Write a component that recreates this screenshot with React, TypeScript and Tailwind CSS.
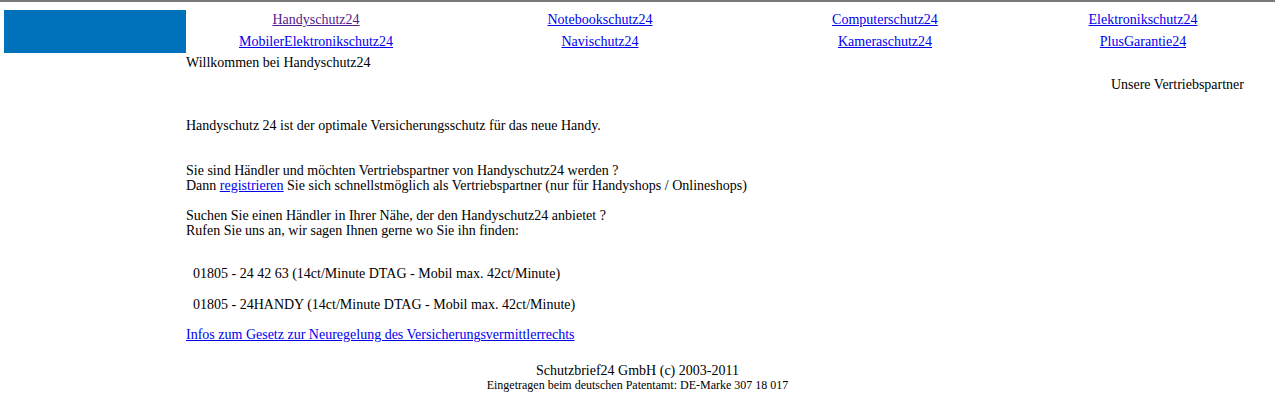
import React from 'react'

const navTop = [
  { label: 'Handyschutz24', visited: true },
  { label: 'Notebookschutz24' },
  { label: 'Computerschutz24' },
  { label: 'Elektronikschutz24' },
]

const navBottom = [
  { label: 'MobilerElektronikschutz24' },
  { label: 'Navischutz24' },
  { label: 'Kameraschutz24' },
  { label: 'PlusGarantie24' },
]

const colWidths = ['w-[260px]', 'w-[308px]', 'w-[262px]', 'w-[254px]']

function NavRow({ items }: { items: { label: string; visited?: boolean }[] }) {
  return (
    <div className="flex leading-[22px]">
      {items.map((item, i) => (
        <div key={item.label} className={`${colWidths[i]} text-center`}>
          <a
            href="#"
            className={`underline ${item.visited ? 'text-[#551a8b]' : 'text-[#0000ee]'}`}
          >
            {item.label}
          </a>
        </div>
      ))}
    </div>
  )
}

export default function App() {
  return (
    <div className="min-h-[417px] bg-white text-[14px] leading-[15px] text-black font-['Liberation_Serif',serif]">
      <div className="h-[2px] bg-[#7a7a7a]" />

      {/* header: logo block + product links */}
      <div className="flex">
        <div className="ml-[4px] mt-[8px] h-[43px] w-[182px] bg-[#0072bc]" />
        <div className="mt-[7px]">
          <NavRow items={navTop} />
          <NavRow items={navBottom} />
        </div>
      </div>

      <div className="pl-[186px] pr-[31px]">
        <div className="mt-[2px]">Willkommen bei Handyschutz24</div>
        <div className="mt-[7px] text-right">Unsere Vertriebspartner</div>

        <div className="mt-[26px]">
          Handyschutz 24 ist der optimale Versicherungsschutz für das neue Handy.
        </div>

        <div className="mt-[30px]">
          Sie sind Händler und möchten Vertriebspartner von Handyschutz24 werden ?
          <br />
          Dann{' '}
          <a href="#" className="text-[#0000ee] underline">
            registrieren
          </a>{' '}
          Sie sich schnellstmöglich als Vertriebspartner (nur für Handyshops / Onlineshops)
        </div>

        <div className="mt-[15px]">
          Suchen Sie einen Händler in Ihrer Nähe, der den Handyschutz24 anbietet ?
          <br />
          Rufen Sie uns an, wir sagen Ihnen gerne wo Sie ihn finden:
        </div>

        <div className="mt-[28px] pl-[7px]">
          01805 - 24 42 63 (14ct/Minute DTAG - Mobil max. 42ct/Minute)
        </div>
        <div className="mt-[16px] pl-[7px]">
          01805 - 24HANDY (14ct/Minute DTAG - Mobil max. 42ct/Minute)
        </div>

        <div className="mt-[15px]">
          <a href="#" className="text-[#0000ee] underline">
            Infos zum Gesetz zur Neuregelung des Versicherungsvermittlerrechts
          </a>
        </div>
      </div>

      <div className="mt-[21px] text-center">
        <div>Schutzbrief24 GmbH (c) 2003-2011</div>
        <div className="text-[12px]">
          Eingetragen beim deutschen Patentamt: DE-Marke 307 18 017
        </div>
      </div>
    </div>
  )
}
